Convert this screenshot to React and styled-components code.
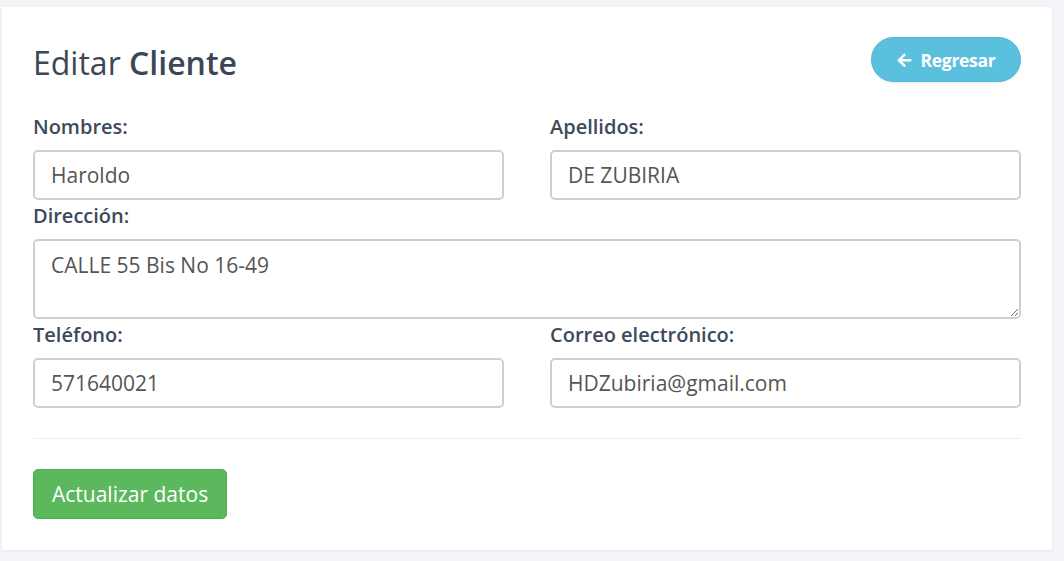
import React from "react";
import styled, { createGlobalStyle } from "styled-components";

const GlobalStyle = createGlobalStyle`
  html, body {
    margin: 0;
    padding: 0;
    background: #f4f5f9;
    font-family: "Open Sans", "Liberation Sans", sans-serif;
  }
  * {
    box-sizing: border-box;
  }
`;

const Page = styled.div`
  padding: 7px 12px 11px 2px;
`;

const Card = styled.div`
  background: #fff;
  padding: 30px 31px 31px;
  box-shadow: 0 1px 3px rgba(30, 40, 60, 0.08);
`;

const Header = styled.div`
  display: flex;
  justify-content: space-between;
  align-items: flex-start;
  margin-bottom: 27px;
`;

const Title = styled.h1`
  margin: 0;
  padding-top: 3px;
  font-size: 32px;
  line-height: 45px;
  font-weight: 400;
  color: #3b4757;

  strong {
    font-weight: 600;
  }
`;

const BackButton = styled.button`
  display: flex;
  align-items: center;
  justify-content: center;
  gap: 9px;
  width: 150px;
  height: 45px;
  border-radius: 23px;
  border: 1px solid #4cb9d9;
  background: #5bc0de;
  color: #fff;
  font-family: inherit;
  font-size: 17.5px;
  font-weight: 700;
  letter-spacing: -0.3px;
  box-shadow: 0 1px 2px rgba(0, 0, 0, 0.08);
  cursor: pointer;
`;

const Form = styled.form`
  display: grid;
  grid-template-columns: 1fr 1fr;
  column-gap: 46px;
  row-gap: 1px;
`;

const Field = styled.div`
  display: flex;
  flex-direction: column;
  grid-column: ${(p) => (p.wide ? "1 / -1" : "auto")};
`;

const Label = styled.label`
  display: block;
  font-size: 20px;
  line-height: 30px;
  font-weight: 600;
  color: #3d4a5b;
  margin-bottom: 8px;
`;

const Input = styled.input`
  height: 50px;
  padding: 0 16px;
  border: 2px solid #cfcfcf;
  border-radius: 5px;
  font-family: inherit;
  font-size: 21px;
  color: #555;
  background: #fff;
  outline: none;
`;

const TextArea = styled.textarea`
  height: 80px;
  padding: 9px 16px;
  border: 2px solid #cfcfcf;
  border-radius: 5px;
  font-family: inherit;
  font-size: 21px;
  line-height: 30px;
  color: #555;
  background: #fff;
  outline: none;
  resize: vertical;
`;

const Divider = styled.hr`
  border: 0;
  border-top: 1px solid #eceef1;
  margin: 30px 0;
`;

const SubmitButton = styled.button`
  height: 50px;
  padding: 0 18px;
  border: 1px solid #4cae4c;
  border-radius: 5px;
  background: #5cb85c;
  color: #fff;
  font-family: inherit;
  font-size: 21px;
  cursor: pointer;
`;

const ArrowLeft = () => (
  <svg width="15" height="14" viewBox="0 0 448 448" fill="currentColor">
    <path d="M257 420l-22 22c-9 9-25 9-34 0L7 248c-9-9-9-25 0-34L201 20c9-9 25-9 34 0l22 22c10 10 9 25 0 35L137 191h287c13 0 24 11 24 24v32c0 13-11 24-24 24H137l120 114c10 10 10 25 0 35z" />
  </svg>
);

export default function App() {
  return (
    <Page>
      <GlobalStyle />
      <Card>
        <Header>
          <Title>
            Editar <strong>Cliente</strong>
          </Title>
          <BackButton type="button">
            <ArrowLeft />
            Regresar
          </BackButton>
        </Header>

        <Form onSubmit={(e) => e.preventDefault()}>
          <Field>
            <Label>Nombres:</Label>
            <Input defaultValue="Haroldo" />
          </Field>
          <Field>
            <Label>Apellidos:</Label>
            <Input defaultValue="DE ZUBIRIA" />
          </Field>
          <Field wide>
            <Label>Dirección:</Label>
            <TextArea defaultValue="CALLE 55 Bis No 16-49" />
          </Field>
          <Field>
            <Label>Teléfono:</Label>
            <Input defaultValue="571640021" />
          </Field>
          <Field>
            <Label>Correo electrónico:</Label>
            <Input defaultValue="HDZubiria@gmail.com" />
          </Field>
        </Form>

        <Divider />

        <SubmitButton type="submit">Actualizar datos</SubmitButton>
      </Card>
    </Page>
  );
}
